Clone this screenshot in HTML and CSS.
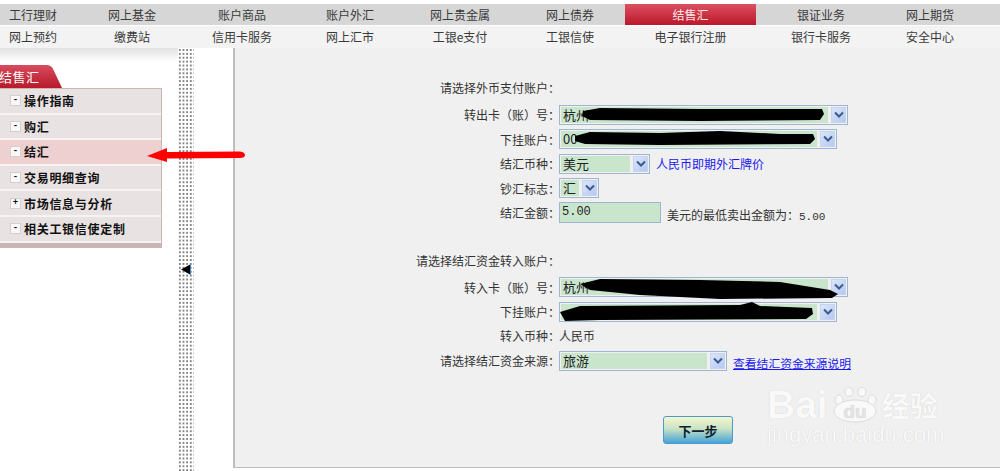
FILE: index.html
```html
<!DOCTYPE html>
<html lang="zh">
<head>
    <meta charset="utf-8">
    <title>结售汇</title>
    <link rel="stylesheet" href="styles.css">
</head>
<body>
    <svg class="defs" width="0" height="0">
        <symbol id="chev" viewBox="0 0 10 8">
            <path d="M1 1.5 L5 5.5 L9 1.5" fill="none" stroke="#3c5a8c" stroke-width="2"/>
        </symbol>
    </svg>

    <div class="nav">
        <a class="nav-first">工行理财</a><a>网上基金</a><a>账户商品</a><a>账户外汇</a><a>网上贵金属</a><a>网上债券</a><a class="on">结售汇</a><a>银证业务</a><a>网上期货</a>
    </div>
    <div class="nav nav2">
        <a class="nav-first">网上预约</a><a>缴费站</a><a>信用卡服务</a><a>网上汇市</a><a>工银e支付</a><a>工银信使</a><a>电子银行注册</a><a>银行卡服务</a><a>安全中心</a>
    </div>

    <div class="page">
        <div class="side">
            <div class="tab"><span>结售汇</span></div>
            <ul class="menu">
                <li><i class="box">-</i>操作指南</li>
                <li><i class="box">-</i>购汇</li>
                <li class="cur"><i class="box">-</i>结汇</li>
                <li><i class="box">-</i>交易明细查询</li>
                <li><i class="box">+</i>市场信息与分析</li>
                <li><i class="box">-</i>相关工银信使定制</li>
            </ul>
        </div>
        <div class="strip"><b class="fold"></b></div>

        <div class="main">
            <div class="row head"><label>请选择外币支付账户：</label></div>
            <div class="row">
                <label>转出卡（账）号：</label>
                <div class="sel w-long"><span class="val">杭州</span><span class="btn"><svg width="10" height="8"><use href="#chev"/></svg></span></div>
            </div>
            <div class="row">
                <label>下挂账户：</label>
                <div class="sel w-mid"><span class="val">00</span><span class="btn"><svg width="10" height="8"><use href="#chev"/></svg></span></div>
            </div>
            <div class="row">
                <label>结汇币种：</label>
                <div class="sel w-cur"><span class="val">美元</span><span class="btn"><svg width="10" height="8"><use href="#chev"/></svg></span></div>
                <a class="link">人民币即期外汇牌价</a>
            </div>
            <div class="row">
                <label>钞汇标志：</label>
                <div class="sel w-flag"><span class="val">汇</span><span class="btn"><svg width="10" height="8"><use href="#chev"/></svg></span></div>
            </div>
            <div class="row">
                <label>结汇金额：</label>
                <div class="amount">5.00</div>
                <span class="note">美元的最低卖出金额为：<em>5.00</em></span>
            </div>

            <div class="row head head2"><label>请选择结汇资金转入账户：</label></div>
            <div class="row">
                <label>转入卡（账）号：</label>
                <div class="sel w-long"><span class="val">杭州</span><span class="btn"><svg width="10" height="8"><use href="#chev"/></svg></span></div>
            </div>
            <div class="row">
                <label>下挂账户：</label>
                <div class="sel w-mid"><span class="val"></span><span class="btn"><svg width="10" height="8"><use href="#chev"/></svg></span></div>
            </div>
            <div class="row row-text">
                <label>转入币种：</label>
                <span class="plain">人民币</span>
            </div>
            <div class="row">
                <label>请选择结汇资金来源：</label>
                <div class="sel w-src"><span class="val">旅游</span><span class="btn"><svg width="10" height="8"><use href="#chev"/></svg></span></div>
                <a class="link link-u">查看结汇资金来源说明</a>
            </div>

            <button class="next">下一步</button>
        </div>
    </div>

    <!-- marks drawn on top of the shot -->
    <svg class="marks" width="1000" height="471" viewBox="0 0 1000 471">
        <g fill="#000">
            <path d="M583 111 L600 108 L700 109 L822 109 L824 114 L820 120 L700 121 L590 120 L582 116 Z"/>
            <path d="M575 136 L590 132 L660 133 L720 131 L780 134 L813 134 L815 139 L810 144 L660 145 L585 144 L575 141 Z"/>
            <path d="M580 284 L600 279 L700 280 L780 282 L830 290 L838 294 L832 298 L720 299 L640 295 L590 290 Z"/>
            <path d="M560 312 L580 306 L740 305 L752 302 L760 306 L812 308 L813 314 L806 319 L600 320 L565 321 Z"/>
        </g>
        <path d="M147 156 L167 148 L167 152 L240 151.500 Q245 152 245 155 Q245 158 240 158 L167 158.500 L167 162 Z" fill="#f00"/>
    </svg>

    <div class="mark">
        <div class="mark-top">
            <span>Bai</span>
            <svg width="48" height="36" viewBox="0 0 48 36">
                <g fill="#f9f9f9" stroke="#dcdcdc">
                    <ellipse cx="8" cy="13" rx="4" ry="5"/>
                    <ellipse cx="18" cy="5" rx="4" ry="4.500"/>
                    <ellipse cx="31" cy="5" rx="4" ry="4.500"/>
                    <ellipse cx="41" cy="13" rx="4" ry="5"/>
                    <ellipse cx="24" cy="24" rx="21" ry="11"/>
                </g>
                <text x="24" y="31" text-anchor="middle" class="mark-du">du</text>
            </svg>
            <span class="mark-cn">经验</span>
        </div>
        <div class="mark-url">jingyan.baidu.com</div>
    </div>
</body>
</html>
```

FILE: styles.css
```css
html, body {
    margin: 0;
    padding: 0;
    height: 471px;
    overflow: hidden;
    background: #fff;
}
body {
    position: relative;
    padding-top: 4px;
    box-sizing: border-box;
    font: 12px "Noto Sans CJK SC", "Liberation Sans", sans-serif;
    color: #333;
}
.defs {
    position: absolute;
}

/* top nav, both rows share the columns */
.nav {
    display: grid;
    grid-template-columns: 75px 114px 106px 110px 110px 110px 131px 130px 88px 26px;
    height: 21px;
    background: #d6d6d6;
    margin-bottom: 1px;
    line-height: 21px;
    text-align: center;
}
.nav a {
    color: #3a3a3a;
}
.nav .nav-first {
    padding-right: 9px;
}
.nav .on {
    color: #fbe8e8;
    background: linear-gradient(#dc5062, #b9182a);
}
.nav2 {
    height: 22px;
    margin: 0;
    background: #f3f3f3;
}

.page {
    display: flex;
    height: 423px;
}

/* left menu */
.side {
    width: 178px;
    padding-top: 17px;
    box-sizing: border-box;
    background: linear-gradient(#e2e2e2, #fff 14px);
}
.tab {
    width: 62px;
    height: 23px;
    background: linear-gradient(#d84c5e, #b71a2b);
    clip-path: path("M0 0 H47 Q52 0 54 6 L62 23 H0 Z");
    color: #fff;
    font-size: 13px;
    line-height: 23px;
    letter-spacing: 0.5px;
}
.tab span {
    margin-left: -1px;
}
.menu {
    list-style: none;
    margin: 0;
    padding: 0 0 5px;
    width: 162px;
    box-sizing: border-box;
    border: 1px solid #cfb4b4;
    border-width: 1px 1px 0 0;
    background: #cdb4b4;
}
.menu li {
    display: flex;
    align-items: center;
    height: 23.600px;
    background: #e8e2e2;
    border-bottom: 2px solid #f6f3f3;
    padding-left: 10px;
    font-weight: bold;
    color: #111;
    letter-spacing: 0.7px;
}
.menu .cur {
    background: #eed0d0;
}
.box {
    width: 9px;
    height: 9px;
    margin-right: 3px;
    border: 1px solid #d5d0d0;
    background: #f8f8f8;
    font: bold 9px/9px "Liberation Mono", monospace;
    text-align: center;
    letter-spacing: 0;
}

/* dotted splitter */
.strip {
    display: flex;
    width: 16px;
    height: 423px;
    padding-top: 216px;
    box-sizing: border-box;
    background-image: radial-gradient(#777 0.6px, #fff 1.1px);
    background-size: 3.67px 3.9px;
}
.fold {
    width: 10px;
    height: 11px;
    margin-left: 3px;
    background: linear-gradient(90deg, #000 85%, #3a8ad0 85%);
    clip-path: polygon(0 50%, 100% 0, 100% 100%);
}

/* form panel */
.main {
    width: 767px;
    height: 420px;
    margin-left: 39px;
    box-sizing: border-box;
    border-left: 2px solid #bdbdbd;
    border-bottom: 1px solid #bdbdbd;
    background: #f0f0f0;
    padding-top: 27px;
}
.row {
    display: flex;
    align-items: center;
    height: 24.500px;
}
.row label {
    width: 325px;
    margin-right: -1px;
    text-align: right;
    flex: none;
}
.head {
    margin-bottom: 3px;
}
.head2 {
    margin-top: 23.500px;
    margin-bottom: 2px;
}
.row-text {
    position: relative;
    top: -1px;
}
.sel {
    display: flex;
    align-items: stretch;
    justify-content: space-between;
    height: 20px;
    padding: 1px;
    box-sizing: border-box;
    border: 1px solid #9fb6d2;
    flex: none;
}
.val {
    flex: 1;
    padding-left: 2px;
    margin-right: 3px;
    background: #c9e6cd;
    font-size: 13px;
    line-height: 16px;
    color: #222;
}
.btn {
    display: flex;
    align-items: center;
    justify-content: center;
    width: 15px;
    background: linear-gradient(135deg, #dbe6fb, #b4c8f0);
    border: 1px solid #c6d4ee;
    box-sizing: border-box;
}
.w-long { width: 289px; }
.w-mid { width: 278px; }
.w-cur { width: 91px; }
.w-flag { width: 40px; }
.w-src { width: 168px; }
.amount {
    width: 102px;
    height: 21px;
    box-sizing: border-box;
    border: 1px solid #9fb6d2;
    background: #c9e6cd;
    padding-left: 2px;
    font: 12px/19px "Liberation Mono", monospace;
    color: #222;
}
.link {
    margin-left: 6px;
    color: #1a1aee;
}
.link-u {
    text-decoration: underline;
    font-size: 11.800px;
    margin-top: 3px;
}
.note {
    margin: 4px 0 0 6px;
}
.note em {
    font: 11px "Liberation Mono", monospace;
}
.plain {
    color: #333;
}
.next {
    display: block;
    width: 70px;
    height: 28px;
    margin: 43px 0 0 428px;
    padding: 0;
    border: 1px solid #4a9ccc;
    border-radius: 3px;
    background: linear-gradient(#f4f6cf, #c9e3c4 45%, #46a2d8);
    font: bold 13px "Noto Sans CJK SC", sans-serif;
    color: #10202c;
}

/* scribbles, arrow and watermark lie over the page */
.marks {
    position: absolute;
    left: 0;
    top: 0;
    pointer-events: none;
}
.mark {
    position: absolute;
    left: 767px;
    top: 386px;
    width: 190px;
    color: #f9f9f9;
    text-shadow: 0 0 1px #c8c8c8;
    font-family: "Liberation Sans", sans-serif;
}
.mark-top {
    display: flex;
    align-items: center;
    height: 38px;
    font-size: 39px;
    font-weight: bold;
    line-height: 38px;
}
.mark-top svg {
    margin: 0 3px 0 3px;
    flex: none;
}
.mark-du {
    font-size: 19px;
    font-weight: bold;
    fill: #e4e4e4;
}
.mark-cn {
    font: bold 28px "Noto Sans CJK SC", sans-serif;
    white-space: nowrap;
}
.mark-url {
    font-size: 22px;
    line-height: 22px;
    white-space: nowrap;
}
```
